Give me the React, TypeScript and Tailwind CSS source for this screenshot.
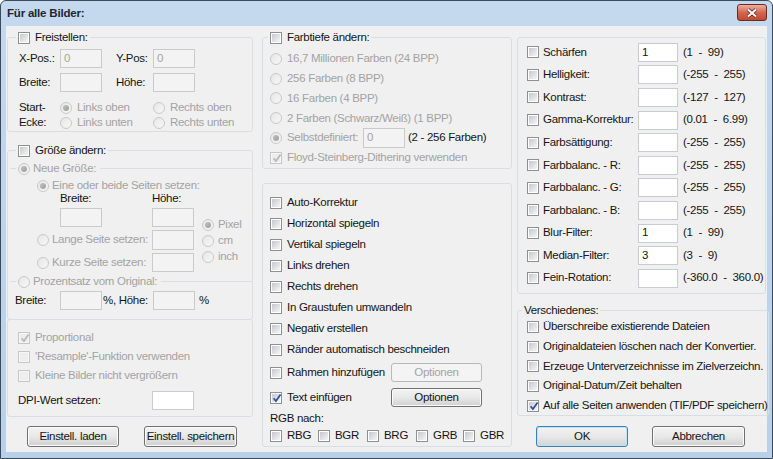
import React from 'react';

const dim = 'text-[#a3a3a3]';

function Check({ checked = false, disabled = false }: { checked?: boolean; disabled?: boolean }) {
  return (
    <span
      className={`relative flex h-[12px] w-[12px] shrink-0 border p-[1px] ${
        disabled ? 'border-[#c6c6c6] bg-[#f7f7f7]' : 'border-[#8e8f8f] bg-white'
      }`}
    >
      <span
        className={`block h-full w-full ${
          disabled ? 'bg-[#ededed]' : 'bg-gradient-to-br from-[#c4c8ce] to-[#f6f6f6]'
        }`}
      />
      {checked && (
        <svg className="absolute left-[1px] top-[0px]" width="10" height="10" viewBox="0 0 10 10">
          <path
            d="M1.6 5.2 L3.9 8 L8.6 1.4"
            fill="none"
            stroke={disabled ? '#b8b8b8' : '#2e4e9e'}
            strokeWidth="1.7"
          />
        </svg>
      )}
    </span>
  );
}

function Radio({ checked = false }: { checked?: boolean }) {
  // every radio on this dialog is disabled
  return (
    <span className="flex h-[12px] w-[12px] shrink-0 items-center justify-center rounded-full border border-[#c9c9c9] bg-gradient-to-br from-[#e6e6e6] to-[#f8f8f8]">
      {checked && <span className="h-[6px] w-[6px] rounded-full bg-gradient-to-br from-[#c2c2c2] to-[#9c9c9c]" />}
    </span>
  );
}

function Field({
  className = '',
  value = '',
  disabled = false,
}: {
  className?: string;
  value?: string;
  disabled?: boolean;
}) {
  return (
    <span
      className={`flex shrink-0 items-center border pl-[3px] ${
        disabled ? 'border-[#cacaca] bg-[#f3f3f3] text-[#a3a3a3]' : 'border-[#c8cbd0] bg-white text-[#151515]'
      } ${className}`}
    >
      {value}
    </span>
  );
}

function Btn({
  children,
  className = '',
  disabled = false,
  focus = false,
}: {
  children: React.ReactNode;
  className?: string;
  disabled?: boolean;
  focus?: boolean;
}) {
  let look = 'border-[#707070] bg-gradient-to-b from-[#f3f3f3] via-[#e8e8e8] to-[#d0d0d0] shadow-[inset_0_0_0_1px_#fbfbfb]';
  if (disabled) look = 'border-[#b5b9bc] bg-[#f4f4f4] text-[#a3a3a3]';
  if (focus)
    look = 'border-[#3c7fb1] bg-gradient-to-b from-[#f3f3f3] via-[#e8e8e8] to-[#d3d3d3] shadow-[inset_0_0_0_1px_#bfe3f7]';
  return (
    <span className={`flex shrink-0 items-center justify-center rounded-[3px] border ${look} ${className}`}>
      {children}
    </span>
  );
}

const box = 'rounded-[3px] border border-[#d5dfe5]';

const adjust = [
  { label: 'Schärfen', value: '1', range: '(1  -  99)' },
  { label: 'Helligkeit:', value: '', range: '(-255  -  255)' },
  { label: 'Kontrast:', value: '', range: '(-127  -  127)' },
  { label: 'Gamma-Korrektur:', value: '', range: '(0.01  -  6.99)' },
  { label: 'Farbsättigung:', value: '', range: '(-255  -  255)' },
  { label: 'Farbbalanc. - R:', value: '', range: '(-255  -  255)' },
  { label: 'Farbbalanc. - G:', value: '', range: '(-255  -  255)' },
  { label: 'Farbbalanc. - B:', value: '', range: '(-255  -  255)' },
  { label: 'Blur-Filter:', value: '1', range: '(1  -  99)' },
  { label: 'Median-Filter:', value: '3', range: '(3  -  9)' },
  { label: 'Fein-Rotation:', value: '', range: '(-360.0  -  360.0)' },
];

const actions = [
  'Auto-Korrektur',
  'Horizontal spiegeln',
  'Vertikal spiegeln',
  'Links drehen',
  'Rechts drehen',
  'In Graustufen umwandeln',
  'Negativ erstellen',
  'Ränder automatisch beschneiden',
];

const misc = [
  { label: 'Überschreibe existierende Dateien', checked: false },
  { label: 'Originaldateien löschen nach der Konvertier.', checked: false },
  { label: 'Erzeuge Unterverzeichnisse im Zielverzeichn.', checked: false },
  { label: 'Original-Datum/Zeit behalten', checked: false },
  { label: 'Auf alle Seiten anwenden (TIF/PDF speichern)', checked: true },
];

const depths = [
  '16,7 Millionen Farben (24 BPP)',
  '256 Farben (8 BPP)',
  '16 Farben (4 BPP)',
  '2 Farben (Schwarz/Weiß) (1 BPP)',
];

export default function App() {
  return (
    <div className="h-[459px] w-[773px] bg-white">
      <div className="flex h-[459px] w-[773px] flex-col overflow-hidden whitespace-nowrap rounded-t-[6px] border border-[#3a4a5c] bg-gradient-to-b from-[#c4d8ee] to-[#b9d0e9] font-['Liberation_Sans',Arial,sans-serif] text-[11.5px] leading-none tracking-[-0.3px] text-[#151515]">
        {/* title bar */}
        <div className="flex h-[25px] shrink-0 items-start justify-between pl-[6px] pr-[5px]">
          <span className="pt-[7px] text-[11.5px] font-bold tracking-[-0.2px] text-[#1d2733]">Für alle Bilder:</span>
          <span className="mt-[3px] flex h-[17px] w-[30px] items-center justify-center rounded-[3px] border border-[#6d2b22] bg-gradient-to-b from-[#e9b0a4] via-[#d4674f] to-[#c04a33]">
            <svg width="14" height="10" viewBox="0 0 14 10">
              <path d="M3 1.5 L11 8.5 M11 1.5 L3 8.5" stroke="#5a2219" strokeWidth="3.6" />
              <path d="M3 1.5 L11 8.5 M11 1.5 L3 8.5" stroke="#ffffff" strokeWidth="2" />
            </svg>
          </span>
        </div>

        <div className="mx-[5px] flex h-[426px] shrink-0 bg-[#f0f0f0] pl-[1px]">
          {/* left column */}
          <div className="flex w-[246px] shrink-0 flex-col">
            <fieldset className={`mt-[5px] h-[101px] ${box}`}>
              <legend className="ml-[8px] flex h-[13px] items-center gap-[5px] px-[2px]">
                <Check />
                <span>Freistellen:</span>
              </legend>
              <div className="mt-[5px] flex h-[19px] items-center pl-[11px]">
                <span className="w-[41px]">X-Pos.:</span>
                <Field disabled value="0" className="h-[19px] w-[42px]" />
                <span className="ml-[14px] w-[37px]">Y-Pos:</span>
                <Field disabled value="0" className="h-[19px] w-[42px]" />
              </div>
              <div className="mt-[5px] flex h-[19px] items-center pl-[11px]">
                <span className="w-[41px]">Breite:</span>
                <Field disabled className="h-[19px] w-[42px]" />
                <span className="ml-[14px] w-[37px]">Höhe:</span>
                <Field disabled className="h-[19px] w-[42px]" />
              </div>
              <div className="mt-[8px] flex pl-[11px]">
                <div className="flex w-[41px] flex-col">
                  <span className="flex h-[15px] items-center">Start-</span>
                  <span className="flex h-[15px] items-center">Ecke:</span>
                </div>
                <div className={`flex w-[93px] flex-col ${dim}`}>
                  <span className="flex h-[15px] items-center gap-[5px]">
                    <Radio checked />
                    Links oben
                  </span>
                  <span className="flex h-[15px] items-center gap-[5px]">
                    <Radio />
                    Links unten
                  </span>
                </div>
                <div className={`flex flex-col ${dim}`}>
                  <span className="flex h-[15px] items-center gap-[5px]">
                    <Radio />
                    Rechts oben
                  </span>
                  <span className="flex h-[15px] items-center gap-[5px]">
                    <Radio />
                    Rechts unten
                  </span>
                </div>
              </div>
            </fieldset>

            <fieldset className={`mt-[12px] h-[176px] ${box}`}>
              <legend className="ml-[8px] flex h-[13px] items-center gap-[5px] px-[2px]">
                <Check />
                <span>Größe ändern:</span>
              </legend>
              <div className="mt-[5px] flex h-[13px] items-center">
                <span className="ml-[2px] h-px w-[6px] bg-[#d5dfe5]" />
                <span className="ml-[2px]">
                  <Radio checked />
                </span>
                <span className={`ml-[3px] ${dim}`}>Neue Größe:</span>
                <span className="ml-[4px] h-px flex-1 bg-[#d5dfe5]" />
              </div>
              <div className={`mt-[4px] flex h-[14px] items-center gap-[3px] pl-[29px] ${dim}`}>
                <Radio checked />
                Eine oder beide Seiten setzen:
              </div>
              <div className="flex h-[12px] items-center pl-[52px]">
                <span className="w-[92px]">Breite:</span>
                <span>Höhe:</span>
              </div>
              <div className="mt-[3px] flex">
                <div className="flex w-[192px] flex-col">
                  <div className="flex h-[19px] items-center pl-[52px]">
                    <Field disabled className="h-[19px] w-[42px]" />
                    <Field disabled className="ml-[50px] h-[19px] w-[42px]" />
                  </div>
                  <div className="mt-[3px] flex h-[20px] items-center pl-[29px]">
                    <Radio />
                    <span className={`ml-[3px] w-[100px] ${dim}`}>Lange Seite setzen:</span>
                    <Field disabled className="h-[20px] w-[42px]" />
                  </div>
                  <div className="mt-[3px] flex h-[19px] items-center pl-[29px]">
                    <Radio />
                    <span className={`ml-[3px] w-[100px] ${dim}`}>Kurze Seite setzen:</span>
                    <Field disabled className="h-[19px] w-[42px]" />
                  </div>
                </div>
                <div className={`mt-[9px] flex flex-col pl-[2px] ${dim}`}>
                  <span className="flex h-[16px] items-center gap-[4px]">
                    <Radio checked />
                    Pixel
                  </span>
                  <span className="flex h-[16px] items-center gap-[4px]">
                    <Radio />
                    cm
                  </span>
                  <span className="flex h-[16px] items-center gap-[4px]">
                    <Radio />
                    inch
                  </span>
                </div>
              </div>
              <div className="mt-[3px] flex h-[13px] items-center">
                <span className="ml-[2px] h-px w-[6px] bg-[#d5dfe5]" />
                <span className="ml-[2px]">
                  <Radio />
                </span>
                <span className={`ml-[3px] ${dim}`}>Prozentsatz vom Original:</span>
                <span className="ml-[4px] h-px flex-1 bg-[#d5dfe5]" />
              </div>
              <div className="mt-[3px] flex h-[19px] items-center pl-[7px]">
                <span className="w-[45px]">Breite:</span>
                <Field disabled className="h-[19px] w-[42px]" />
                <span className="ml-[1px] w-[50px]">%, Höhe:</span>
                <Field disabled className="h-[19px] w-[42px]" />
                <span className="ml-[4px]">%</span>
              </div>
            </fieldset>

            <div className={`-mt-px h-[98px] ${box}`}>
              <div className={`mt-[10px] flex flex-col gap-[3px] pl-[10px] ${dim}`}>
                <span className="flex h-[16px] items-center gap-[5px]">
                  <Check checked disabled />
                  Proportional
                </span>
                <span className="flex h-[16px] items-center gap-[5px]">
                  <Check disabled />
                  'Resample'-Funktion verwenden
                </span>
                <span className="flex h-[16px] items-center gap-[5px]">
                  <Check disabled />
                  Kleine Bilder nicht vergrößern
                </span>
              </div>
              <div className="mt-[7px] flex h-[19px] items-center pl-[10px]">
                <span className="w-[134px]">DPI-Wert setzen:</span>
                <Field className="h-[19px] w-[42px]" />
              </div>
            </div>

            <div className="mt-[9px] flex pl-[20px]">
              <Btn className="h-[21px] w-[92px]">Einstell. laden</Btn>
              <Btn className="ml-[25px] h-[21px] w-[93px]">Einstell. speichern</Btn>
            </div>
          </div>

          {/* middle column */}
          <div className="ml-[9px] flex w-[250px] shrink-0 flex-col">
            <fieldset className={`mt-[5px] h-[138px] ${box}`}>
              <legend className="ml-[5px] flex h-[13px] items-center gap-[5px] px-[2px]">
                <Check />
                <span>Farbtiefe ändern:</span>
              </legend>
              <div className="mt-[5px] flex flex-col pl-[7px]">
                {depths.map((d) => (
                  <span key={d} className={`flex h-[19.8px] items-center gap-[5px] ${dim}`}>
                    <Radio />
                    {d}
                  </span>
                ))}
                <span className="flex h-[19.8px] items-center">
                  <Radio checked />
                  <span className={`ml-[5px] w-[76px] ${dim}`}>Selbstdefiniert:</span>
                  <Field disabled value="0" className="h-[20px] w-[42px]" />
                  <span className="ml-[3px]">(2 - 256 Farben)</span>
                </span>
                <span className={`flex h-[19.8px] items-center gap-[5px] ${dim}`}>
                  <Check checked disabled />
                  Floyd-Steinberg-Dithering verwenden
                </span>
              </div>
            </fieldset>

            <div className={`mt-[14px] h-[264px] ${box}`}>
              <div className="mt-[8px] flex flex-col pl-[7px]">
                {actions.map((a) => (
                  <span key={a} className="flex h-[21px] items-center gap-[5px]">
                    <Check />
                    {a}
                  </span>
                ))}
              </div>
              <div className="mt-[3px] flex h-[19px] items-center pl-[7px]">
                <span className="flex w-[121px] items-center gap-[5px]">
                  <Check />
                  Rahmen hinzufügen
                </span>
                <Btn disabled className="h-[19px] w-[91px]">
                  Optionen
                </Btn>
              </div>
              <div className="mt-[6px] flex h-[19px] items-center pl-[7px]">
                <span className="flex w-[121px] items-center gap-[5px]">
                  <Check checked />
                  Text einfügen
                </span>
                <Btn className="h-[19px] w-[91px]">Optionen</Btn>
              </div>
              <div className="mt-[5px] flex h-[14px] items-center pl-[7px]">RGB nach:</div>
              <div className="mt-[3px] flex h-[14px] items-center pl-[7px]">
                <span className="flex w-[48px] items-center gap-[5px]">
                  <Check />
                  RBG
                </span>
                <span className="flex w-[49px] items-center gap-[5px]">
                  <Check />
                  BGR
                </span>
                <span className="flex w-[49px] items-center gap-[5px]">
                  <Check />
                  BRG
                </span>
                <span className="flex w-[47px] items-center gap-[5px]">
                  <Check />
                  GRB
                </span>
                <span className="flex items-center gap-[5px]">
                  <Check />
                  GBR
                </span>
              </div>
            </div>
          </div>

          {/* right column */}
          <div className="ml-[5px] flex w-[249px] shrink-0 flex-col">
            <div className={`mt-[11px] h-[257px] ${box}`}>
              <div className="mt-[3px] flex flex-col pl-[9px]">
                {adjust.map((r) => (
                  <div key={r.label} className="flex h-[22.6px] items-center">
                    <Check />
                    <span className="ml-[4px] w-[95px]">{r.label}</span>
                    <Field value={r.value} className="h-[19px] w-[40px]" />
                    <span className="ml-[5px] whitespace-pre">{r.range}</span>
                  </div>
                ))}
              </div>
            </div>

            <fieldset className={`mt-[10px] h-[112px] ${box}`}>
              <legend className="ml-[4px] flex h-[13px] items-center px-[2px]">Verschiedenes:</legend>
              <div className="flex flex-col pl-[9px]">
                {misc.map((m) => (
                  <span key={m.label} className="flex h-[19.75px] items-center gap-[4px]">
                    <Check checked={m.checked} />
                    {m.label}
                  </span>
                ))}
              </div>
            </fieldset>

            <div className="mt-[10px] flex pl-[19px]">
              <Btn focus className="h-[21px] w-[92px]">
                OK
              </Btn>
              <Btn className="ml-[24px] h-[21px] w-[93px]">Abbrechen</Btn>
            </div>
          </div>
        </div>
      </div>
    </div>
  );
}
